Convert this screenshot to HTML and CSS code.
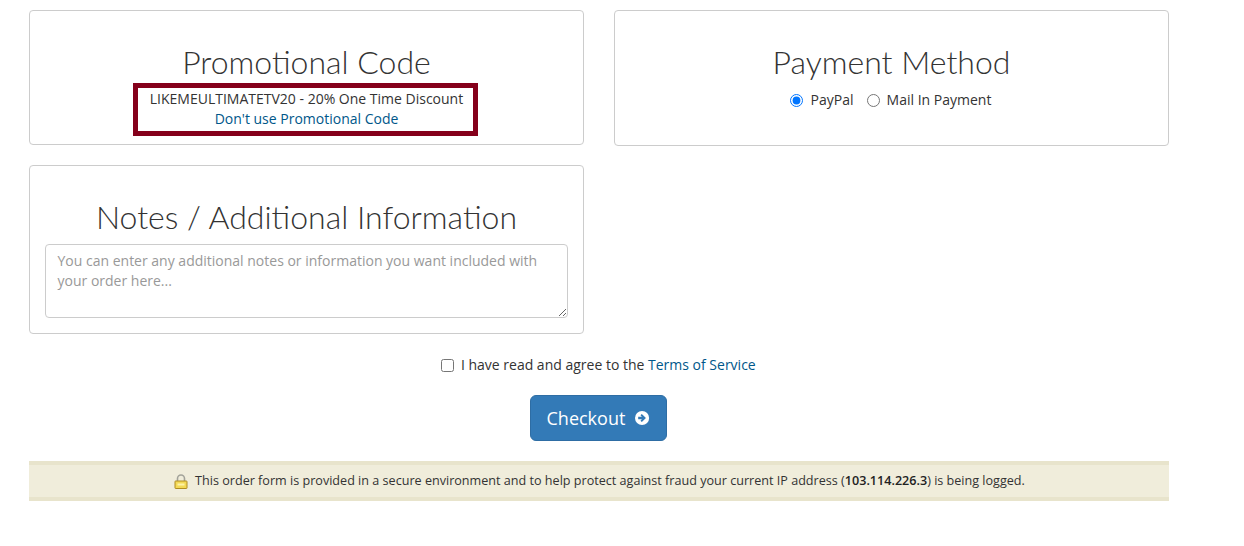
FILE: index.html
```html
<!DOCTYPE html>
<html lang="en">
<head>
<meta charset="utf-8">
<title>Checkout</title>
<link rel="stylesheet" href="styles.css">
</head>
<body>
<main class="page">
  <div class="cards">
    <section class="card card-promo">
      <h2 class="card-title">Promotional Code</h2>
      <div class="promo-box">
        <div class="promo-line">LIKEMEULTIMATETV20 - 20% One Time Discount</div>
        <a class="link" href="#">Don't use Promotional Code</a>
      </div>
    </section>
    <section class="card card-pay">
      <h2 class="card-title">Payment Method</h2>
      <div class="pay-options">
        <label class="option"><input class="radio" type="radio" name="pay" checked> PayPal</label>
        <label class="option"><input class="radio" type="radio" name="pay"> Mail In Payment</label>
      </div>
    </section>
    <section class="card card-notes">
      <h2 class="card-title">Notes / Additional Information</h2>
      <textarea class="notes" placeholder="You can enter any additional notes or information you want included with your order here..."></textarea>
    </section>
  </div>
  <div class="terms">
    <label><input class="check" type="checkbox"> I have read and agree to the <a class="link" href="#">Terms of Service</a></label>
  </div>
  <div class="actions">
    <button class="checkout" type="button">Checkout
      <svg class="arrow" viewBox="0 0 16 16" aria-hidden="true"><circle cx="8" cy="8" r="8" fill="#fff"/><path d="M3.6 6.6h4.2L6.2 5l1.5-1.5L12.4 8l-4.7 4.5L6.2 11l1.6-1.6H3.6z" fill="#337ab7"/></svg>
    </button>
  </div>
  <div class="notice">
    <svg class="lock" viewBox="0 0 14 15" aria-hidden="true">
      <path d="M3.5 7.5V4.5a3.5 3.5 0 0 1 7 0v3" fill="none" stroke="#a3a39a" stroke-width="1.6"/>
      <rect x="1" y="7" width="12" height="7.5" rx=".6" fill="#f3d955" stroke="#b08c22"/>
      <rect x="3.5" y="9.5" width="7" height="2" fill="#fdf3a8"/>
    </svg>
    <span>This order form is provided in a secure environment and to help protect against fraud your current IP address (<strong>103.114.226.3</strong>) is being logged.</span>
  </div>
</main>
</body>
</html>
```
FILE: styles.css
```css
* { box-sizing: border-box; }
html, body { margin: 0; background: #fff; }
body {
  font-family: "Open Sans", "Liberation Sans", sans-serif;
  font-size: 14px;
  line-height: 20px;
  color: #333;
}
.page { width: 1140px; margin-left: 29px; padding-top: 10px; }
.cards {
  display: grid;
  grid-template-columns: 555px 555px;
  column-gap: 30px;
  row-gap: 19px;
  align-items: start;
}
.card {
  border: 1px solid #ccc;
  border-radius: 4px;
  text-align: center;
  padding: 0 15px;
}
.card-promo { height: 135px; }
.card-pay { height: 136px; }
.card-notes { height: 169px; }
.card-title {
  margin: 29px 0 0;
  font-family: Lato, "Open Sans", sans-serif;
  font-weight: 300;
  font-size: 32px;
  line-height: 43px;
  color: #333;
}
.promo-box {
  display: flex;
  flex-direction: column;
  align-items: center;
  margin: 0 0 0 88px;
  border: 5px solid #85001b;
  padding: 1px 0 0 2px;
  height: 53px;
  width: 345px;
  line-height: 19.5px;
}
.promo-line { white-space: nowrap; }
.link { color: #00578a; text-decoration: none; }
.pay-options { display: flex; justify-content: center; gap: 13px; margin-top: 7px; padding-right: 2px; }
.option { display: flex; align-items: center; gap: 7px; }
.option:first-child { gap: 8px; }
.radio { width: 13px; height: 13px; margin: 0; }
.notes {
  display: block;
  width: 523px;
  height: 74px;
  margin-top: 6px;
  padding: 6px 12px 6px 11.5px;
  border: 1px solid #ccc;
  border-radius: 4px;
  font: 14px/20px "Open Sans", "Liberation Sans", sans-serif;
  color: #555;
}
.notes::placeholder { color: #999; opacity: 1; }
.terms { text-align: center; margin-top: 21px; padding-right: 1px; }
.check { width: 13px; height: 13px; margin: 0 3px 0 0; vertical-align: -2px; }
.actions { display: flex; justify-content: center; margin-top: 20px; padding-right: 2px; }
.checkout {
  display: flex;
  align-items: center;
  gap: 10px;
  height: 46px;
  width: 137px;
  padding: 0 16px;
  background: #337ab7;
  border: 1px solid #2e6da4;
  border-radius: 6px;
  color: #fff;
  font: 18px/24px "Open Sans", "Liberation Sans", sans-serif;
}
.arrow { width: 16px; height: 16px; }
.notice {
  display: flex;
  justify-content: center;
  align-items: center;
  gap: 7px;
  height: 40px;
  margin-top: 20px;
  padding-left: 1px;
  background: #f0eddb;
  border-top: 4px solid #e8e4cc;
  border-bottom: 4px solid #e8e4cc;
  font-size: 12.6px;
  color: #333;
}
.notice strong { font-weight: 600; color: #222; }
.lock { width: 14px; height: 15px; }
```
